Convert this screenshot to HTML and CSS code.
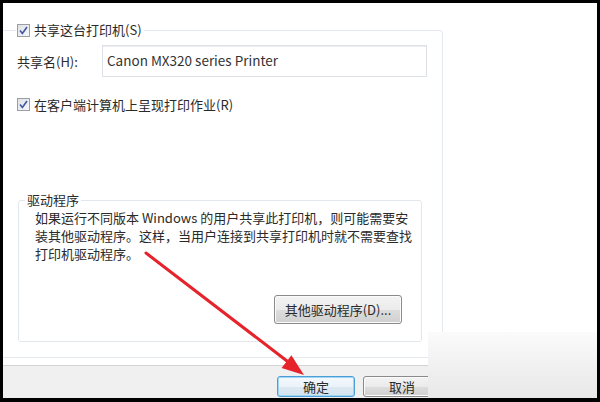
FILE: index.html
```html
<!DOCTYPE html>
<html lang="zh-CN">
<head>
<meta charset="utf-8">
<title>共享</title>
<link rel="stylesheet" href="styles.css">
</head>
<body>
<div class="window">
  <fieldset class="share">
    <legend class="check-legend">
      <span class="checkbox"><svg viewBox="0 0 13 13" width="13" height="13"><path d="M3 6.5 L5.4 9.4 L10 3" fill="none" stroke="#3f56a6" stroke-width="1.6"/></svg></span>
      <span>共享这台打印机(S)</span>
    </legend>
    <div class="name-row">
      <span class="name-label">共享名(H):</span>
      <div class="name-input">Canon MX320 series Printer</div>
    </div>
    <div class="check-row">
      <span class="checkbox"><svg viewBox="0 0 13 13" width="13" height="13"><path d="M3 6.5 L5.4 9.4 L10 3" fill="none" stroke="#3f56a6" stroke-width="1.6"/></svg></span>
      <span>在客户端计算机上呈现打印作业(R)</span>
    </div>
    <fieldset class="drivers">
      <legend class="drivers-legend">驱动程序</legend>
      <p class="drivers-text">如果运行不同版本 Windows 的用户共享此打印机，则可能需要安<br>装其他驱动程序。这样，当用户连接到共享打印机时就不需要查找<br>打印机驱动程序。</p>
      <div class="drivers-actions">
        <button class="btn btn-wide" type="button">其他驱动程序(D)...</button>
      </div>
    </fieldset>
  </fieldset>
  <div class="footer">
    <button class="btn btn-ok" type="button">确定</button>
    <button class="btn" type="button">取消</button>
  </div>
  <div class="veil"></div>
  <svg class="arrow" viewBox="0 0 594 395" width="594" height="395">
    <line x1="143" y1="250" x2="284" y2="358" stroke="#e6232a" stroke-width="3" stroke-linecap="round"/>
    <polygon points="301,372 278.6,365 288.4,352.2" fill="#e6232a"/>
  </svg>
</div>
</body>
</html>
```

FILE: styles.css
```css
html, body {
  margin: 0;
  padding: 0;
  background: #000;
}
body {
  padding: 3px;
  font-family: "Noto Sans CJK SC", "Noto Sans", sans-serif;
  font-size: 13px;
  color: #2a2a2a;
}
.window {
  position: relative;
  width: 594px;
  height: 395px;
  background: #fff;
  overflow: hidden;
}
fieldset {
  margin: 0;
  min-width: 0;
  box-sizing: border-box;
}
.share {
  margin: 19px 0 0 -10px;
  width: 450px;
  padding: 0 0 15px 23px;
  border: 1px solid #e4e9ef;
  border-radius: 3px;
}
.check-legend {
  display: flex;
  align-items: center;
  gap: 4px;
  height: 16px;
  line-height: 16px;
  padding: 0 2px 0 1px;
  margin-left: -1px;
}
.checkbox {
  display: inline-block;
  width: 13px;
  height: 13px;
  box-sizing: border-box;
  border: 1px solid #9a9fa6;
  background: linear-gradient(135deg, #dfe1e4, #f7f7f8);
  position: relative;
  flex: none;
}
.checkbox svg {
  position: absolute;
  left: -1px;
  top: -1px;
}
.name-row {
  display: flex;
  align-items: center;
  margin-top: 7px;
}
.name-label {
  width: 85px;
  flex: none;
}
.name-input {
  width: 325px;
  height: 32px;
  box-sizing: border-box;
  border: 1px solid #dde1e6;
  box-shadow: inset 0 1px 0 #eceef0;
  padding: 0 4px;
  line-height: 28px;
  font-size: 13.5px;
  color: #333;
}
.check-row {
  display: flex;
  align-items: center;
  gap: 4px;
  height: 16px;
  margin-top: 19px;
}
.drivers {
  margin: 80px 0 0 1px;
  width: 404px;
  padding: 1px 19px 17px 16px;
  border: 1px solid #e2e7ed;
  border-radius: 3px;
}
.drivers-legend {
  height: 16px;
  line-height: 16px;
  padding: 0 2px;
  margin-left: -10px;
}
.drivers-text {
  margin: 0;
  line-height: 18px;
  white-space: nowrap;
}
.drivers-actions {
  display: flex;
  justify-content: flex-end;
  margin-top: 32px;
}
.btn {
  font-family: inherit;
  font-size: 13px;
  color: #2a2a2a;
  width: 78px;
  height: 21px;
  padding: 0;
  line-height: 19px;
  border: 1px solid #8a8a8a;
  border-radius: 3px;
  background: linear-gradient(#f3f3f3 0%, #ebebeb 50%, #dddddd 51%, #d0d0d0 100%);
  box-shadow: inset 0 0 0 1px #fbfbfb;
}
.btn-wide {
  width: 128px;
  height: 29px;
  line-height: 27px;
}
.btn-ok {
  border-color: #4b9fd5;
  box-shadow: inset 0 0 0 1px #9fd6f5;
  background: linear-gradient(#f4f9fc 0%, #eaf3f9 50%, #dde9f2 51%, #d2e3ef 100%);
}
.footer {
  display: flex;
  gap: 8px;
  margin-top: 7px;
  height: 33px;
  box-sizing: border-box;
  padding: 10px 0 0 274px;
  border-top: 1px solid #d2d4d6;
  background: #f0f0f0;
}
.veil {
  position: absolute;
  left: 425px;
  top: 329px;
  width: 169px;
  height: 66px;
  background: linear-gradient(#fbfbfb, #efefef 60%, #e8e8e8);
}
.arrow {
  position: absolute;
  left: 0;
  top: 0;
  pointer-events: none;
}
```
